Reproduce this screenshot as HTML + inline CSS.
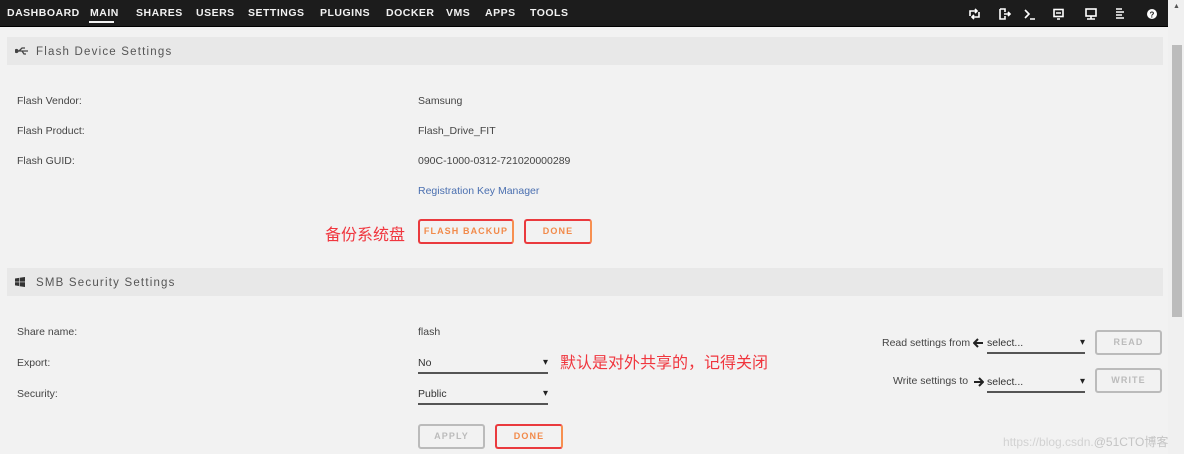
<!DOCTYPE html>
<html><head><meta charset="utf-8"><style>
*{margin:0;padding:0;box-sizing:border-box}
body{width:1184px;height:454px;background:#f2f2f2;font-family:"Liberation Sans","Noto Sans CJK SC",sans-serif;position:relative;overflow:hidden;color:#333}
.nav{position:absolute;left:0;top:0;width:1168px;height:27px;background:#1c1c1c;border-bottom:1px solid #000}
.nav span{position:absolute;top:7px;color:#f2f2f2;font-weight:bold;font-size:10.5px;letter-spacing:0.5px}
.a{position:absolute;font-size:10.5px;color:#444;white-space:nowrap}
.hdr{position:absolute;left:7px;width:1156px;height:28px;background:#e8e8e8}
.hdr .t{position:absolute;left:29px;top:9px;font-size:11.5px;letter-spacing:1.2px;color:#555}
.btn{position:absolute;height:25px;border:2px solid #ea3a3e;border-radius:3px;color:#f28a4a;font-weight:bold;font-size:9px;letter-spacing:1.1px;text-align:center;line-height:21px;border-right-color:#f79050;}
.dis{border:2px solid #bbb;color:#bbb}
.sel{position:absolute;border-bottom:2px solid #555;height:17px;font-size:10.5px;color:#333}
.sel:after{content:"▾";position:absolute;right:0;top:0;font-size:10px;color:#222}
.cn{position:absolute;color:#f0363e;font-size:16px;white-space:nowrap}
</style></head><body>
<div class="nav">
<span style="left:7px">DASHBOARD</span>
<span style="left:90px">MAIN</span>
<div style="position:absolute;left:89px;top:21px;width:25px;height:2px;background:#f2f2f2"></div>
<span style="left:136px">SHARES</span>
<span style="left:196px">USERS</span>
<span style="left:248px">SETTINGS</span>
<span style="left:320px">PLUGINS</span>
<span style="left:386px">DOCKER</span>
<span style="left:446px">VMS</span>
<span style="left:485px">APPS</span>
<span style="left:530px">TOOLS</span>
<svg style="position:absolute;left:968px;top:7px" width="200" height="14" viewBox="0 0 200 14" fill="none" stroke="#fff" stroke-width="1.6">
<path d="M2 9V4h7M7 2l2 2-2 2M11 5v5H4M6 12l-2-2 2-2"/>
<path d="M32 2h5v3M32 2v10h5v-3M36 7h6M40 5l2 2-2 2"/>
<path d="M57 3l4 4-4 4M62 12h5"/>
<rect x="86" y="2.5" width="9" height="7"/><path d="M88 6h5M89 12h3"/>
<rect x="118" y="2" width="10" height="7"/><path d="M123 9v3M119 12h8"/>
<path d="M148 2h6M148 5h8M148 8h6M148 11h8"/>
<circle cx="184" cy="7" r="5" fill="#fff" stroke="none"/>
<text x="181.5" y="10.5" font-size="8" font-weight="bold" fill="#1c1c1c" stroke="none" font-family="Liberation Sans">?</text>
</svg>
</div>
<div style="position:absolute;left:1168px;top:0;width:16px;height:454px;background:#f0f0f0"></div>
<div style="position:absolute;left:1172px;top:45px;width:10px;height:272px;background:#bcbcbc"></div>
<div style="position:absolute;left:1173px;top:3px;font-size:7px;color:#555">▲</div>

<div class="hdr" style="top:37px"><svg style="position:absolute;left:8px;top:9px" width="14" height="10" viewBox="0 0 14 10" fill="none" stroke="#444" stroke-width="1.3"><path d="M1 5h12M4 5l3-3h3M7 5l2 3h2"/><circle cx="1.5" cy="5" r="1.5" fill="#444"/></svg><span class="t">Flash Device Settings</span></div>
<div class="a" style="left:17px;top:95px">Flash Vendor:</div>
<div class="a" style="left:418px;top:95px">Samsung</div>
<div class="a" style="left:17px;top:125px">Flash Product:</div>
<div class="a" style="left:418px;top:125px">Flash_Drive_FIT</div>
<div class="a" style="left:17px;top:155px">Flash GUID:</div>
<div class="a" style="left:418px;top:155px">090C-1000-0312-721020000289</div>
<div class="a" style="left:418px;top:185px;color:#4a6fb0">Registration Key Manager</div>
<div class="cn" style="left:325px;top:221px">备份系统盘</div>
<div class="btn" style="left:418px;top:219px;width:96px">FLASH BACKUP</div>
<div class="btn" style="left:524px;top:219px;width:68px">DONE</div>

<div class="hdr" style="top:268px"><svg style="position:absolute;left:8px;top:9px" width="10" height="10" viewBox="0 0 10 10" fill="#333"><path d="M0 1.5l4-.6V4.6H0zM4.6.8L10 0v4.6H4.6zM0 5.2h4v3.8l-4-.6zM4.6 5.2H10V10l-5.4-.8z"/></svg><span class="t">SMB Security Settings</span></div>
<div class="a" style="left:17px;top:326px">Share name:</div>
<div class="a" style="left:418px;top:326px">flash</div>
<div class="a" style="left:17px;top:357px">Export:</div>
<div class="sel" style="left:418px;top:357px;width:130px">No</div>
<div class="cn" style="left:560px;top:349px">默认是对外共享的，记得关闭</div>
<div class="a" style="left:17px;top:388px">Security:</div>
<div class="sel" style="left:418px;top:388px;width:130px">Public</div>
<div class="btn dis" style="left:418px;top:424px;width:67px">APPLY</div>
<div class="btn" style="left:495px;top:424px;width:68px">DONE</div>

<div class="a" style="left:882px;top:337px">Read settings from</div>
<svg style="position:absolute;left:973px;top:338px" width="11" height="10" viewBox="0 0 11 10" fill="none" stroke="#222" stroke-width="2"><path d="M10 5H2M5 1L1 5l4 4"/></svg>
<div class="sel" style="left:987px;top:337px;width:98px">select...</div>
<div class="btn dis" style="left:1095px;top:330px;width:67px">READ</div>
<div class="a" style="left:893px;top:375px">Write settings to</div>
<svg style="position:absolute;left:973px;top:377px" width="11" height="10" viewBox="0 0 11 10" fill="none" stroke="#222" stroke-width="2"><path d="M1 5h8M6 1l4 4-4 4"/></svg>
<div class="sel" style="left:987px;top:376px;width:98px">select...</div>
<div class="btn dis" style="left:1095px;top:368px;width:67px">WRITE</div>
<div class="a" style="left:1003px;top:433px;color:#d2d2d2;font-size:12px">https://blog.csdn.<span style="color:#c4c4c4">@51CTO博客</span></div>
</body></html>
